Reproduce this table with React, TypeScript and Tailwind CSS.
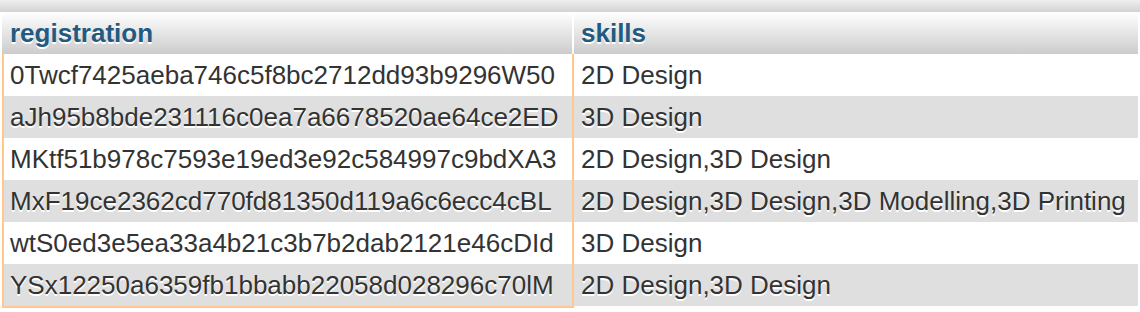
const rows = [
  ["0Twcf7425aeba746c5f8bc2712dd93b9296W50", "2D Design"],
  ["aJh95b8bde231116c0ea7a6678520ae64ce2ED", "3D Design"],
  ["MKtf51b978c7593e19ed3e92c584997c9bdXA3", "2D Design,3D Design"],
  ["MxF19ce2362cd770fd81350d119a6c6ecc4cBL", "2D Design,3D Design,3D Modelling,3D Printing"],
  ["wtS0ed3e5ea33a4b21c3b7b2dab2121e46cDId", "3D Design"],
  ["YSx12250a6359fb1bbabb22058d028296c70lM", "2D Design,3D Design"],
];

export default function App() {
  return (
    <div className="h-[312px] w-[1140px] overflow-hidden bg-white font-['Liberation_Sans',Arial,sans-serif] text-[26px]">
      {/* tail of the bar above the table */}
      <div className="h-[12px] bg-gradient-to-b from-[#efefef] to-[#d3d3d3]" />

      <div className="px-[2px]">
        {/* header */}
        <div className="flex h-[42px] bg-gradient-to-b from-white to-[#cccccc] font-bold leading-[42px] text-[#235a81] [text-shadow:0_2px_0_#fff]">
          <div className="w-[572px] border-r-2 border-white pl-[8px]">registration</div>
          <div className="flex-1 pl-[7px]">skills</div>
        </div>

        {/* data rows */}
        {rows.map(([reg, skills], i) => (
          <div
            key={reg}
            className={`flex h-[42px] leading-[42px] text-[#333] [text-shadow:0_2px_0_#fff] ${
              i % 2 === 1 ? "bg-[#dfdfdf]" : "bg-white"
            }`}
          >
            <div
              className={`w-[572px] whitespace-nowrap border-x-2 border-[#ffc88f] pl-[6px] ${
                i === rows.length - 1 ? "h-[44px] border-b-2" : ""
              }`}
            >
              {reg}
            </div>
            <div className="flex-1 whitespace-nowrap pl-[7px]">{skills}</div>
          </div>
        ))}
      </div>
    </div>
  );
}
